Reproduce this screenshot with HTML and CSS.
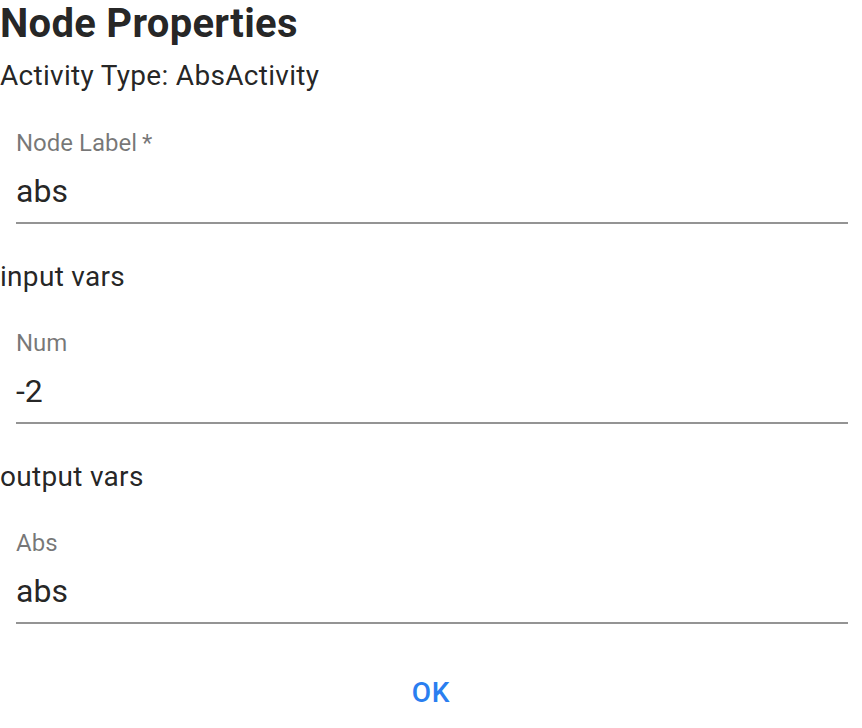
FILE: index.html
```html
<!DOCTYPE html>
<html>
<head>
<meta charset="utf-8">
<link rel="stylesheet" href="styles.css">
</head>
<body>
<div class="dialog">
  <h1 class="title">Node Properties</h1>
  <p class="subtitle">Activity Type: AbsActivity</p>
  <div class="field">
    <label class="field-label">Node Label&thinsp;*</label>
    <div class="field-input">abs</div>
  </div>
  <p class="section">input vars</p>
  <div class="field">
    <label class="field-label">Num</label>
    <div class="field-input">-2</div>
  </div>
  <p class="section">output vars</p>
  <div class="field">
    <label class="field-label">Abs</label>
    <div class="field-input">abs</div>
  </div>
  <div class="actions">
    <button class="btn">OK</button>
  </div>
</div>
</body>
</html>
```

FILE: styles.css
```css
html, body {
  margin: 0;
  padding: 0;
  background: #fff;
}
body {
  font-family: Roboto, "Liberation Sans", sans-serif;
  color: rgba(0, 0, 0, 0.87);
}
.dialog {
  width: 862px;
}
.title {
  margin: 0;
  font-size: 40px;
  line-height: 48px;
  font-weight: 700;
  letter-spacing: 0.3px;
}
.subtitle {
  margin: 8px 0 0;
  font-size: 28px;
  line-height: 40px;
  font-weight: 400;
  letter-spacing: 0.3px;
}
.field {
  margin: 32px 0 0 16px;
  padding-top: 3px;
  width: 832px;
  border-bottom: 2px solid #949494;
}
.section + .field {
  margin-top: 31px;
}
.field-label {
  display: block;
  font-size: 24px;
  line-height: 24px;
  color: rgba(0, 0, 0, 0.54);
}
.field-input {
  margin-top: 17px;
  font-size: 32px;
  line-height: 38px;
  padding-bottom: 12px;
}
.section {
  margin: 33px 0 0;
  font-size: 28px;
  line-height: 40px;
  letter-spacing: 0.3px;
}
.actions {
  display: flex;
  justify-content: center;
  margin-top: 32px;
}
.btn {
  border: 0;
  background: none;
  padding: 12px 16px;
  font-family: Roboto, "Liberation Sans", sans-serif;
  font-size: 28px;
  line-height: 49px;
  font-weight: 500;
  letter-spacing: 0.8px;
  text-transform: uppercase;
  color: #2a7ef0;
  cursor: pointer;
}
```
